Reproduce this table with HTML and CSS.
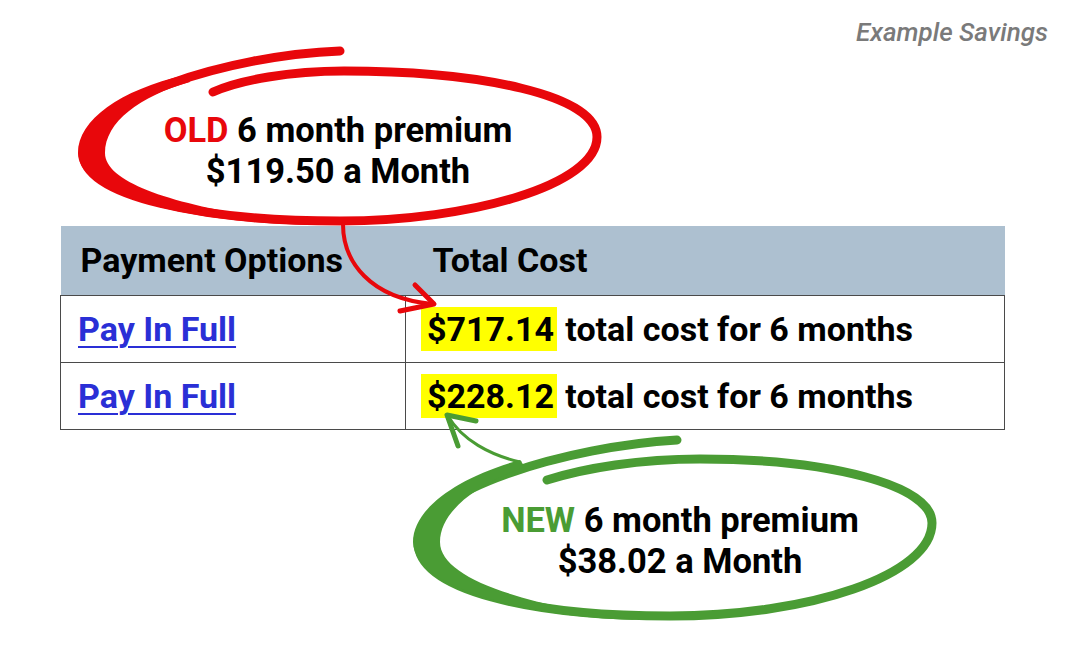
FILE: index.html
```html
<!DOCTYPE html>
<html lang="en">
<head>
<meta charset="utf-8">
<title>Example Savings</title>
<link rel="stylesheet" href="styles.css">
</head>
<body>
<div class="page">
  <header class="top">
    <span class="caption">Example Savings</span>
  </header>

  <table class="plans">
    <thead>
      <tr>
        <th class="col-opt">Payment Options</th>
        <th class="col-cost">Total Cost</th>
      </tr>
    </thead>
    <tbody>
      <tr>
        <td class="col-opt"><a href="#" class="pay-link">Pay In Full</a></td>
        <td class="col-cost"><span class="hl">$717.14</span> total cost for 6 months</td>
      </tr>
      <tr>
        <td class="col-opt"><a href="#" class="pay-link">Pay In Full</a></td>
        <td class="col-cost"><span class="hl">$228.12</span> total cost for 6 months</td>
      </tr>
    </tbody>
  </table>

  <svg class="marks" width="1065" height="669" viewBox="0 0 1065 669" aria-hidden="true">
    <g class="mark-red">
      <path class="ring" d="M340 51 C230 55 83 100 83 153 C83 197 205 221 340 221 C470 221 597 185 597 137 C597 95 480 71 344 71 C290 71 240 80 213 92"/>
      <path class="fill" d="M185 75 C120 90 78 120 78 153 C78 195 190 224 320 225 C200 212 105 188 105 153 C105 122 140 96 190 82 Z"/>
      <path class="arrow" d="M343 224 C343 262 370 298 432 304"/>
      <path class="head" d="M415 285 L434 304 L400 311"/>
    </g>
    <g class="mark-green">
      <path class="ring" d="M677 440 C570 446 418 490 418 542 C418 590 530 616 670 616 C810 616 932 575 932 523 C932 485 830 459 700 459 C640 459 585 468 547 480"/>
      <path class="fill" d="M520 460 C455 478 413 510 413 542 C413 585 520 618 640 620 C530 606 440 580 440 542 C440 512 475 485 525 467 Z"/>
      <path class="arrow" d="M520 462 C490 455 462 440 448 416"/>
      <path class="head" d="M458 446 L447 415 L476 421"/>
    </g>
  </svg>

  <div class="callout callout-old">
    <p><span class="tag-old">OLD</span> 6 month premium</p>
    <p>$119.50 a Month</p>
  </div>
  <div class="callout callout-new">
    <p><span class="tag-new">NEW</span> 6 month premium</p>
    <p>$38.02 a Month</p>
  </div>
</div>
</body>
</html>
```

FILE: styles.css
```css
* { box-sizing: border-box; }

html, body {
  margin: 0;
  padding: 0;
  background: #ffffff;
}

body {
  font-family: Roboto, "Liberation Sans", Arial, sans-serif;
  color: #000;
}

.page {
  position: relative;
  width: 1065px;
  height: 669px;
  overflow: hidden;
}

.top {
  height: 226px;
  display: flex;
  justify-content: flex-end;
  align-items: flex-start;
  padding: 17px 17px 0 0;
}

.caption {
  font-size: 26px;
  line-height: 30px;
  font-style: italic;
  font-weight: 500;
  color: #7a7a7a;
}

.plans {
  margin-left: 60px;
  width: 945px;
  border-collapse: collapse;
  font-size: 34px;
  font-weight: 700;
}

.plans th {
  background: #adc0d0;
  height: 69px;
  text-align: left;
  font-weight: 700;
  padding: 0;
  vertical-align: middle;
}

.plans th.col-opt { padding-left: 20px; width: 345px; }
.plans th.col-cost { padding-left: 27px; }

.plans td {
  border: 1px solid #4a4a4a;
  height: 67px;
  padding: 0;
  vertical-align: middle;
}

.plans td.col-opt { padding-left: 17px; }
.plans td.col-cost { padding-left: 15px; }

.pay-link {
  color: #2a2fd6;
  text-decoration: underline;
  text-decoration-thickness: 2px;
  text-underline-offset: 5px;
}

.hl {
  display: inline-block;
  background: #ffff00;
  line-height: 44px;
  padding: 0 3px 0 6px;
}

.marks {
  position: absolute;
  left: 0;
  top: 0;
  pointer-events: none;
}

.marks .ring {
  fill: none;
  stroke-width: 9;
  stroke-linecap: round;
}

.marks .arrow {
  fill: none;
  stroke-width: 4;
  stroke-linecap: round;
}

.marks .head {
  fill: none;
  stroke-width: 5;
  stroke-linecap: round;
  stroke-linejoin: round;
}

.mark-red .ring, .mark-red .arrow, .mark-red .head { stroke: #e8070b; }
.mark-red .fill { fill: #e8070b; }
.mark-green .ring, .mark-green .arrow, .mark-green .head { stroke: #4a9c34; }
.mark-green .fill { fill: #4a9c34; }
.mark-green .arrow { stroke-width: 3; }

.callout {
  position: absolute;
  width: 420px;
  text-align: center;
  font-size: 34.5px;
  line-height: 41px;
  font-weight: 700;
}

.callout p { margin: 0; }

.callout-old { left: 128px; top: 110px; }
.callout-new { left: 470px; top: 500px; }

.tag-old { color: #e8070b; }
.tag-new { color: #4a9c34; }
```
